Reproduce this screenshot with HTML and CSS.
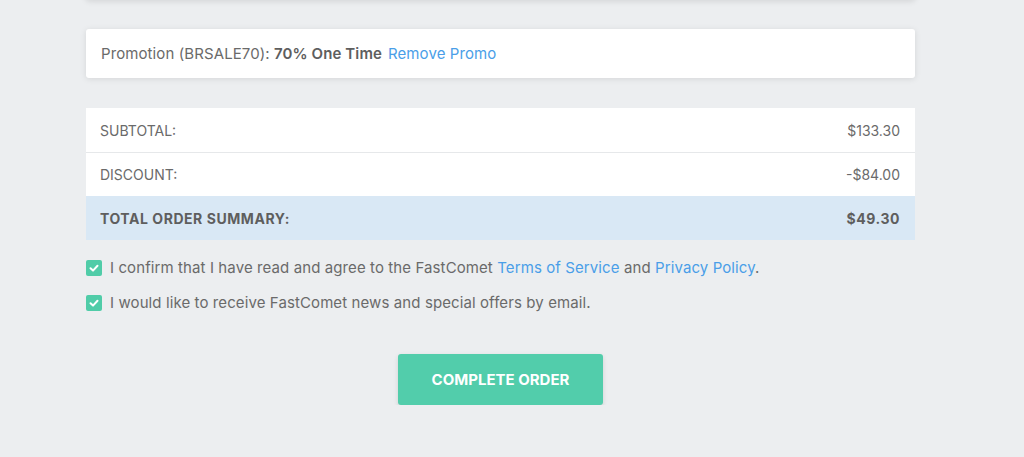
FILE: index.html
```html
<!DOCTYPE html>
<html>
<head>
<meta charset="utf-8">
<link rel="stylesheet" href="styles.css">
</head>
<body>
<div class="wrap">
  <div class="prev-card"></div>
  <div class="promo">
    <span>Promotion (BRSALE70): </span><strong>70% One Time</strong>
    <a class="link remove">Remove Promo</a>
  </div>
  <div class="summary">
    <div class="row"><span>SUBTOTAL:</span><span>$133.30</span></div>
    <div class="row"><span>DISCOUNT:</span><span>-$84.00</span></div>
    <div class="row total"><span>TOTAL ORDER SUMMARY:</span><span>$49.30</span></div>
  </div>
  <div class="checks">
    <label class="check">
      <span class="box"><svg viewBox="0 0 16 16" width="16" height="16"><path d="M4.5 8.3 L7 10.6 L11.5 5.8" fill="none" stroke="#fff" stroke-width="2" stroke-linecap="round" stroke-linejoin="round"/></svg></span>
      <span>I confirm that I have read and agree to the FastComet <a class="link">Terms of Service</a> and <a class="link">Privacy Policy</a>.</span>
    </label>
    <label class="check">
      <span class="box"><svg viewBox="0 0 16 16" width="16" height="16"><path d="M4.5 8.3 L7 10.6 L11.5 5.8" fill="none" stroke="#fff" stroke-width="2" stroke-linecap="round" stroke-linejoin="round"/></svg></span>
      <span>I would like to receive FastComet news and special offers by email.</span>
    </label>
  </div>
  <div class="actions">
    <button class="btn">COMPLETE ORDER</button>
  </div>
</div>
</body>
</html>
```

FILE: styles.css
```css
html, body {
  margin: 0;
  padding: 0;
  background: #eceef0;
  font-family: Inter, "Noto Sans", sans-serif;
  color: #6a6a6a;
  overflow: hidden;
}
.wrap {
  width: 829px;
  margin-left: 86px;
}
.prev-card {
  height: 20px;
  margin-top: -20px;
  background: #fff;
  border-radius: 3px;
  box-shadow: 0 1px 6px rgba(0,0,0,0.12);
}
.promo {
  margin-top: 29px;
  height: 49px;
  box-sizing: border-box;
  background: #fff;
  border-radius: 3px;
  box-shadow: 0 1px 6px rgba(0,0,0,0.10);
  display: flex;
  align-items: center;
  padding-left: 15px;
  font-size: 15px;
  letter-spacing: 0.1px;
  white-space: pre;
}
.promo strong {
  font-weight: 600;
  color: #5e5e5e;
}
.link {
  color: #4a9ee8;
  text-decoration: none;
}
.remove {
  margin-left: 6px;
}
.summary {
  margin-top: 30px;
  background: #fff;
}
.row {
  height: 44px;
  display: flex;
  align-items: center;
  justify-content: space-between;
  padding: 0 15px 0 14px;
  font-size: 14px;
  color: #6a6a6a;
  border-top: 1px solid #e6e8ea;
  box-sizing: border-box;
}
.row:first-child {
  border-top: 0;
}
.row.total {
  background: #d9e8f5;
  font-weight: 700;
  letter-spacing: 0.55px;
  color: #5e5e5e;
  border-top: 0;
}
.checks {
  margin-top: 19px;
  display: flex;
  flex-direction: column;
  gap: 17px;
}
.check {
  display: flex;
  align-items: center;
  gap: 8px;
  font-size: 15px;
  letter-spacing: 0.1px;
  line-height: 18px;
  color: #6a6a6a;
}
.box {
  width: 16px;
  height: 16px;
  background: #50cca8;
  border-radius: 2px;
  display: flex;
  flex: none;
}
.actions {
  margin-top: 42px;
  display: flex;
  justify-content: center;
}
.btn {
  width: 205px;
  height: 51px;
  border: 0;
  border-radius: 3px;
  background: #52cdab;
  color: #fff;
  font-family: inherit;
  font-weight: 700;
  font-size: 15px;
  box-shadow: 0 2px 5px rgba(0,0,0,0.12);
}
```
